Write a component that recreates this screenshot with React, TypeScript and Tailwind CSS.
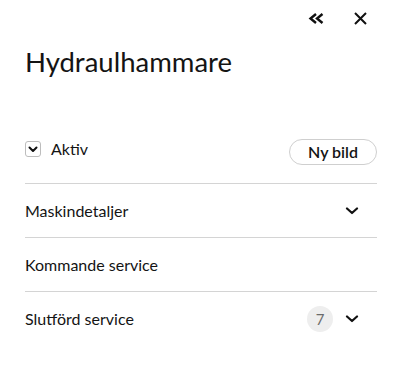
import React from "react"

const Chevron = () => (
  <svg width="14" height="8" viewBox="0 0 14 8" fill="none" stroke="#111" strokeWidth="2.2" strokeLinecap="round" strokeLinejoin="round">
    <path d="M2 1.5 L7 6 L12 1.5" />
  </svg>
)

const Row = ({ label, badge, chevron }: { label: string; badge?: number; chevron?: boolean }) => (
  <div className="flex items-center justify-between h-[54px] border-b border-[#d4d4d4] last:border-none">
    <span className="text-[16px] text-[#141414]">{label}</span>
    <div className="flex items-center gap-[12px] pr-[18px]">
      {badge !== undefined && (
        <span className="w-[26px] h-[26px] rounded-full bg-[#eeeeee] text-[#6b6b6b] text-[15px] flex items-center justify-center">
          {badge}
        </span>
      )}
      {chevron && <Chevron />}
    </div>
  </div>
)

export default function App() {
  return (
    <div className="w-[400px] h-[376px] bg-white pl-[25px] pr-[23px] font-['Lato','Open_Sans',sans-serif] text-[#141414]">
      <div className="flex justify-end items-center gap-[30px] pt-[12px] pr-[10px] h-[24px]">
        <button aria-label="Fäll ihop">
          <svg width="16" height="11" viewBox="0 0 16 11" fill="none" stroke="#111" strokeWidth="2.4" strokeLinejoin="miter">
            <path d="M8 1 L2.5 5.5 L8 10 M14.5 1 L9 5.5 L14.5 10" />
          </svg>
        </button>
        <button aria-label="Stäng">
          <svg width="13" height="13" viewBox="0 0 13 13" fill="none" stroke="#111" strokeWidth="2">
            <path d="M1 1 L12 12 M12 1 L1 12" />
          </svg>
        </button>
      </div>

      <h1 className="mt-[22px] text-[27.5px] leading-[32px] text-[#141414]">Hydraulhammare</h1>

      <div className="flex items-center justify-between mt-[61px] pb-[18px] border-b border-[#d4d4d4]">
        <label className="flex items-center gap-[10px] -mt-[6px]">
          <span className="w-[16px] h-[16px] rounded-[3px] border border-[#bdbdbd] flex items-center justify-center">
            <svg width="10" height="7" viewBox="0 0 10 7" fill="none" stroke="#111" strokeWidth="2" strokeLinecap="round" strokeLinejoin="round">
              <path d="M1.5 1.5 L5 5 L8.5 1.5" />
            </svg>
          </span>
          <span className="text-[16px]">Aktiv</span>
        </label>
        <button className="w-[88px] h-[26px] rounded-full border border-[#cfcfcf] text-[16px] font-semibold text-[#141414] leading-none">
          Ny bild
        </button>
      </div>

      <Row label="Maskindetaljer" chevron />
      <Row label="Kommande service" />
      <Row label="Slutförd service" badge={7} chevron />
    </div>
  )
}
